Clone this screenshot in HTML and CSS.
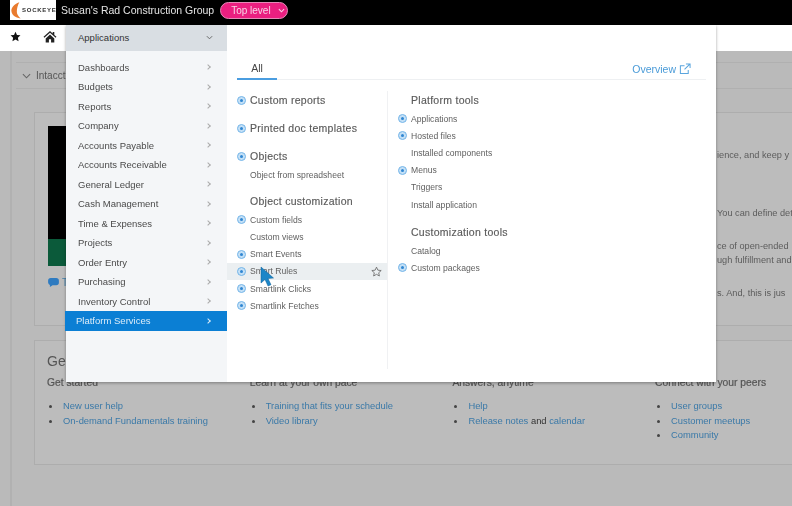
FILE: index.html
```html
<!DOCTYPE html>
<html lang="en">
<head>
<meta charset="utf-8">
<title>Sockeye - Applications menu</title>
<link rel="stylesheet" href="styles.css">
</head>
<body>
<div class="page">
  <header class="topbar">
    <div class="logo">
      <svg class="logo-mark" viewBox="0 0 12 20" aria-hidden="true"><path d="M10 0C3.500 2.500 0 6.500 .5 11c.5 4.500 4.500 7.800 11 8.500C8.500 16.500 7 14.500 7 11.500 7 7.500 8 3.500 10 0z"/></svg>
      <span class="logo-text">SOCKEYE</span>
    </div>
    <span class="company">Susan's Rad Construction Group</span>
    <span class="pill">Top level
      <svg class="pill-chev" viewBox="0 0 8 5" aria-hidden="true"><path d="M1 1l3 3 3-3"/></svg>
    </span>
  </header>

  <nav class="navbar">
    <svg class="nav-star" viewBox="0 0 24 24" aria-hidden="true"><path d="M12 1.500l3.200 7 7.600.9-5.600 5.200 1.500 7.500L12 18.300l-6.700 3.800 1.500-7.500L1.200 9.400l7.600-.9z"/></svg>
    <svg class="nav-home" viewBox="0 0 26 24" aria-hidden="true"><path d="M13 2L1 12.500l1.500 1.700L13 5l10.500 9.200 1.500-1.700-4-3.500V3.500h-3v3zM5 15.500V23h6v-6h4v6h6v-7.500L13 8.500z"/></svg>
  </nav>

  <main class="content">
    <section class="intro">
      <svg class="intro-chev" viewBox="0 0 10 6" aria-hidden="true"><path d="M1 1l4 4 4-4"/></svg>
      <span class="intro-title">Intacct</span>
    </section>

    <section class="card card-top">
      <div class="media">
        <div class="media-black"></div>
        <div class="media-green"></div>
        <div class="chat">
          <svg class="chat-icon" viewBox="0 0 12 10" aria-hidden="true"><path d="M3 0h6a3 3 0 0 1 3 3v2a3 3 0 0 1-3 3H5L2 10V7.700A3 3 0 0 1 0 5V3a3 3 0 0 1 3-3z"/></svg>
          <span>T</span>
        </div>
      </div>
      <div class="peek">
        <p class="peek-a">ience, and keep y</p>
        <p class="peek-b">You can define det</p>
        <p class="peek-c">ce of open-ended</p>
        <p class="peek-d">ugh fulfillment and</p>
        <p class="peek-e">s. And, this is jus</p>
      </div>
    </section>

    <section class="card card-help">
      <h2 class="help-title">Get</h2>
      <div class="help-grid">
        <div>
          <h3>Get started</h3>
          <ul>
            <li><a>New user help</a></li>
            <li><a>On-demand Fundamentals training</a></li>
          </ul>
        </div>
        <div>
          <h3>Learn at your own pace</h3>
          <ul>
            <li><a>Training that fits your schedule</a></li>
            <li><a>Video library</a></li>
          </ul>
        </div>
        <div>
          <h3>Answers, anytime</h3>
          <ul>
            <li><a>Help</a></li>
            <li><a>Release notes</a> and <a>calendar</a></li>
          </ul>
        </div>
        <div>
          <h3>Connect with your peers</h3>
          <ul>
            <li><a>User groups</a></li>
            <li><a>Customer meetups</a></li>
            <li><a>Community</a></li>
          </ul>
        </div>
      </div>
    </section>
  </main>

  <div class="menu">
    <aside class="apps">
      <div class="apps-head">
        <span>Applications</span>
        <svg class="chev-down" viewBox="0 0 8 5" aria-hidden="true"><path d="M1 1l3 3 3-3"/></svg>
      </div>
      <ul class="apps-list">
        <li>Dashboards<i></i></li>
        <li>Budgets<i></i></li>
        <li>Reports<i></i></li>
        <li>Company<i></i></li>
        <li>Accounts Payable<i></i></li>
        <li>Accounts Receivable<i></i></li>
        <li>General Ledger<i></i></li>
        <li>Cash Management<i></i></li>
        <li>Time &amp; Expenses<i></i></li>
        <li>Projects<i></i></li>
        <li>Order Entry<i></i></li>
        <li>Purchasing<i></i></li>
        <li>Inventory Control<i></i></li>
        <li class="active">Platform Services<i></i></li>
      </ul>
    </aside>

    <div class="panel">
      <div class="tabs">
        <span class="tab">All</span>
        <a class="overview">Overview
          <svg class="ext" viewBox="0 0 13 13" aria-hidden="true"><path d="M10 7.500V11.500H1.500V3H6M7.500 1h4.500v4.500M12 1L6 7"/></svg>
        </a>
      </div>
      <div class="cols">
        <div class="col col-left">
          <div class="row head mb"><b class="add"></b><span>Custom reports</span></div>
          <div class="row head mb"><b class="add"></b><span>Printed doc templates</span></div>
          <div class="row head"><b class="add"></b><span>Objects</span></div>
          <div class="row item"><b></b><span>Object from spreadsheet</span></div>
          <div class="row head mt"><b></b><span>Object customization</span></div>
          <div class="row item"><b class="add"></b><span>Custom fields</span></div>
          <div class="row item"><b></b><span>Custom views</span></div>
          <div class="row item"><b class="add"></b><span>Smart Events</span></div>
          <div class="row item hover"><b class="add"></b><span>Smart Rules</span>
            <svg class="fav" viewBox="0 0 24 24" aria-hidden="true"><path d="M12 2.500l3 6.600 7.200.8-5.400 4.800 1.500 7.100L12 18.200l-6.300 3.600 1.500-7.100L1.800 9.900 9 9.100z"/></svg>
          </div>
          <div class="row item"><b class="add"></b><span>Smartlink Clicks</span></div>
          <div class="row item"><b class="add"></b><span>Smartlink Fetches</span></div>
        </div>
        <div class="col col-right">
          <div class="row head"><b></b><span>Platform tools</span></div>
          <div class="row item"><b class="add"></b><span>Applications</span></div>
          <div class="row item"><b class="add"></b><span>Hosted files</span></div>
          <div class="row item"><b></b><span>Installed components</span></div>
          <div class="row item"><b class="add"></b><span>Menus</span></div>
          <div class="row item"><b></b><span>Triggers</span></div>
          <div class="row item"><b></b><span>Install application</span></div>
          <div class="row head mt"><b></b><span>Customization tools</span></div>
          <div class="row item"><b></b><span>Catalog</span></div>
          <div class="row item"><b class="add"></b><span>Custom packages</span></div>
        </div>
      </div>
    </div>
  </div>

  <svg class="cursor" viewBox="0 0 14 21" aria-hidden="true"><path d="M1 1v16l4-3.500 3 6.500 3-1.300-3-6.200 5.500-.5z"/></svg>
</div>
</body>
</html>
```
FILE: styles.css
```css
* { box-sizing: border-box; }
html, body { margin: 0; padding: 0; }
body {
  width: 792px;
  height: 506px;
  overflow: hidden;
  background: #bababa;
  font-family: "Liberation Sans", Arial, sans-serif;
}
.page {
  position: relative;
  width: 792px;
  height: 506px;
  overflow: hidden;
  filter: blur(0.45px);
}

/* Top bar */
.topbar {
  height: 25px;
  background: #000;
  display: flex;
  align-items: flex-start;
  padding-left: 10px;
}
.logo {
  width: 46px;
  height: 20px;
  background: #fff;
  display: flex;
  align-items: center;
  padding-left: 1px;
}
.logo-mark { width: 10px; height: 19px; fill: #e97b2e; flex: none; }
.logo-text {
  margin-left: 1px;
  font-size: 6px;
  font-weight: 700;
  letter-spacing: 0.75px;
  color: #333;
}
.company {
  margin-left: 5px;
  font-size: 10.500px;
  line-height: 20px;
  color: #e4e4e4;
  white-space: nowrap;
}
.pill {
  margin: 2px 0 0 6px;
  width: 68px;
  height: 17px;
  border-radius: 9px;
  border: 1px solid #e58ab8;
  background: #ea1f80;
  color: #f7d3e5;
  font-size: 10px;
  line-height: 15px;
  display: flex;
  align-items: center;
  padding-left: 10px;
  gap: 7px;
}
.pill-chev { width: 7px; height: 5px; fill: none; stroke: #f7d3e5; stroke-width: 1.200; }

/* Nav */
.navbar {
  height: 26px;
  background: #fff;
  display: flex;
  align-items: center;
  padding: 0 0 4px 10px;
}
.nav-star { width: 11px; height: 11px; fill: #111; }
.nav-home { width: 14px; height: 13px; fill: #222; margin-left: 22px; }

/* Background page */
.content {
  margin-left: 10px;
  height: 455px;
  border-left: 2px solid #b1b1b1;
  padding-top: 11px;
}
.intro {
  height: 27px;
  border-top: 1px solid #b0b0b0;
  border-bottom: 1px solid #b0b0b0;
  display: flex;
  align-items: center;
  padding-left: 6px;
  margin-left: 4px;
}
.intro-chev { width: 9px; height: 6px; fill: none; stroke: #666; stroke-width: 1.200; }
.intro-title { margin-left: 5px; font-size: 10px; color: #555; }

.card {
  margin-left: 22px;
  width: 780px;
  background: #bcbcbc;
  border: 1px solid #adadad;
}
.card-top {
  margin-top: 23px;
  height: 214px;
  display: flex;
}
.media { width: 682px; padding: 13px 0 0 13px; flex: none; }
.media-black { width: 60px; height: 113px; background: #000; }
.media-green { width: 60px; height: 27px; background: #0b5a3a; }
.chat {
  display: flex;
  align-items: center;
  gap: 3px;
  margin-top: 11px;
  color: #3f7ea8;
  font-size: 10px;
}
.chat-icon { width: 11px; height: 9px; fill: #2f7bc0; }
.peek { color: #5c5c5c; font-size: 9.200px; white-space: nowrap; }
.peek p { margin: 0; line-height: 12px; }
.peek-a { padding-top: 36px; }
.peek-b { padding-top: 46px; }
.peek-c { padding-top: 21px; }
.peek-d { padding-top: 2px; }
.peek-e { padding-top: 21px; }

.card-help {
  margin-top: 14px;
  height: 125px;
  padding: 11px 0 0 12px;
  color: #555;
}
.help-title {
  margin: 0;
  font-size: 14px;
  font-weight: 400;
  line-height: 18px;
}
.help-grid {
  display: grid;
  grid-template-columns: repeat(4, 202.700px);
  margin-top: 6px;
  font-size: 9.400px;
}
.help-grid h3 {
  margin: 0;
  font-size: 10.300px;
  font-weight: 400;
  line-height: 14px;
  -webkit-text-stroke: 0.2px #555;
}
.help-grid ul { margin: 9px 0 0; padding: 0 0 0 16px; list-style: none; }
.help-grid li { position: relative; line-height: 14.500px; color: #333; }
.help-grid li::before {
  content: "";
  position: absolute;
  left: -14px;
  top: 6px;
  width: 3px;
  height: 3px;
  border-radius: 50%;
  background: #444;
}
.help-grid li a { color: #3a79a8; }

/* Menu overlay */
.menu {
  position: absolute;
  left: 66px;
  top: 25px;
  width: 650px;
  height: 357px;
  display: flex;
  background: #fff;
  box-shadow: 0 1px 3px rgba(0,0,0,.35);
}
.apps {
  width: 161px;
  background: #f4f6f8;
  flex: none;
}
.apps-head {
  height: 26px;
  background: #d9dee3;
  display: flex;
  align-items: center;
  justify-content: space-between;
  padding: 0 14px 1px 12px;
  font-size: 9.500px;
  color: #333;
}
.chev-down { width: 7px; height: 5px; fill: none; stroke: #666; stroke-width: 1.100; }
.apps-list {
  list-style: none;
  margin: 6.250px 0 0;
  padding: 0;
}
.apps-list li {
  height: 19.500px;
  display: flex;
  align-items: center;
  justify-content: space-between;
  padding: 0 17px 0 12px;
  font-size: 9.500px;
  color: #4a4a4a;
}
.apps-list i {
  width: 4px;
  height: 4px;
  border-top: 1px solid #aaa;
  border-right: 1px solid #aaa;
  transform: rotate(45deg);
}
.apps-list .active {
  margin-left: -1px;
  padding-left: 11px;
  background: #0b7fd4;
  color: #dcecf8;
  height: 20px;
}
.apps-list .active i { border-color: #dcecf8; }

.panel { flex: 1; display: flex; flex-direction: column; }
.tabs {
  margin: 26px 10px 0 10px;
  height: 29px;
  border-bottom: 1px solid #eef0f2;
  display: flex;
  align-items: center;
  justify-content: space-between;
}
.tab {
  width: 40px;
  height: 29px;
  margin-bottom: -1px;
  padding-top: 11px;
  text-align: center;
  font-size: 10.500px;
  line-height: 13px;
  color: #444;
  border-bottom: 2px solid #4a9de0;
}
.overview {
  display: flex;
  align-items: center;
  gap: 3px;
  margin-right: 15px;
  padding-top: 7px;
  font-size: 10.500px;
  color: #4a9bd8;
}
.ext { width: 12px; height: 12px; fill: none; stroke: #5aa5de; stroke-width: 1.100; }
.cols { display: flex; flex: 1; padding-top: 11px; }
.col { width: 161px; height: 278px; }
.col-left { border-right: 1px solid #f0f1f3; }
.row {
  position: relative;
  display: grid;
  align-items: center;
  white-space: nowrap;
}
.col-left .row { grid-template-columns: 9px 1fr; column-gap: 4px; padding-left: 10px; }
.col-right .row { grid-template-columns: 9px 1fr; column-gap: 4px; padding-left: 10px; }
.head { height: 18px; font-size: 10.500px; color: #5a5a5a; letter-spacing: 0.27px; }
.head span { -webkit-text-stroke: 0.15px #5a5a5a; }
.item { height: 17.200px; font-size: 8.600px; color: #5f5f5f; }
.head + .item { margin-top: 1px; }
.mb { margin-bottom: 10px; }
.mt { margin-top: 10px; }
.col-left .mt { margin-top: 9px; }
.add {
  width: 9px;
  height: 9px;
  border-radius: 50%;
  background: #c4e0f6;
  border: 1px solid #74b5e8;
  display: flex;
  align-items: center;
  justify-content: center;
}
.add::after {
  content: "";
  width: 3px;
  height: 3px;
  border-radius: 50%;
  background: #2f86d2;
}
.hover { background: #ebeff1; }
.fav {
  position: absolute;
  right: 5px;
  top: 3px;
  width: 11px;
  height: 11px;
  fill: none;
  stroke: #666;
  stroke-width: 1.800;
}
.cursor {
  position: absolute;
  left: 260px;
  top: 266px;
  width: 14px;
  height: 21px;
  fill: #1c86c8;
  stroke: #0f5f94;
  stroke-width: .5;
}
```
